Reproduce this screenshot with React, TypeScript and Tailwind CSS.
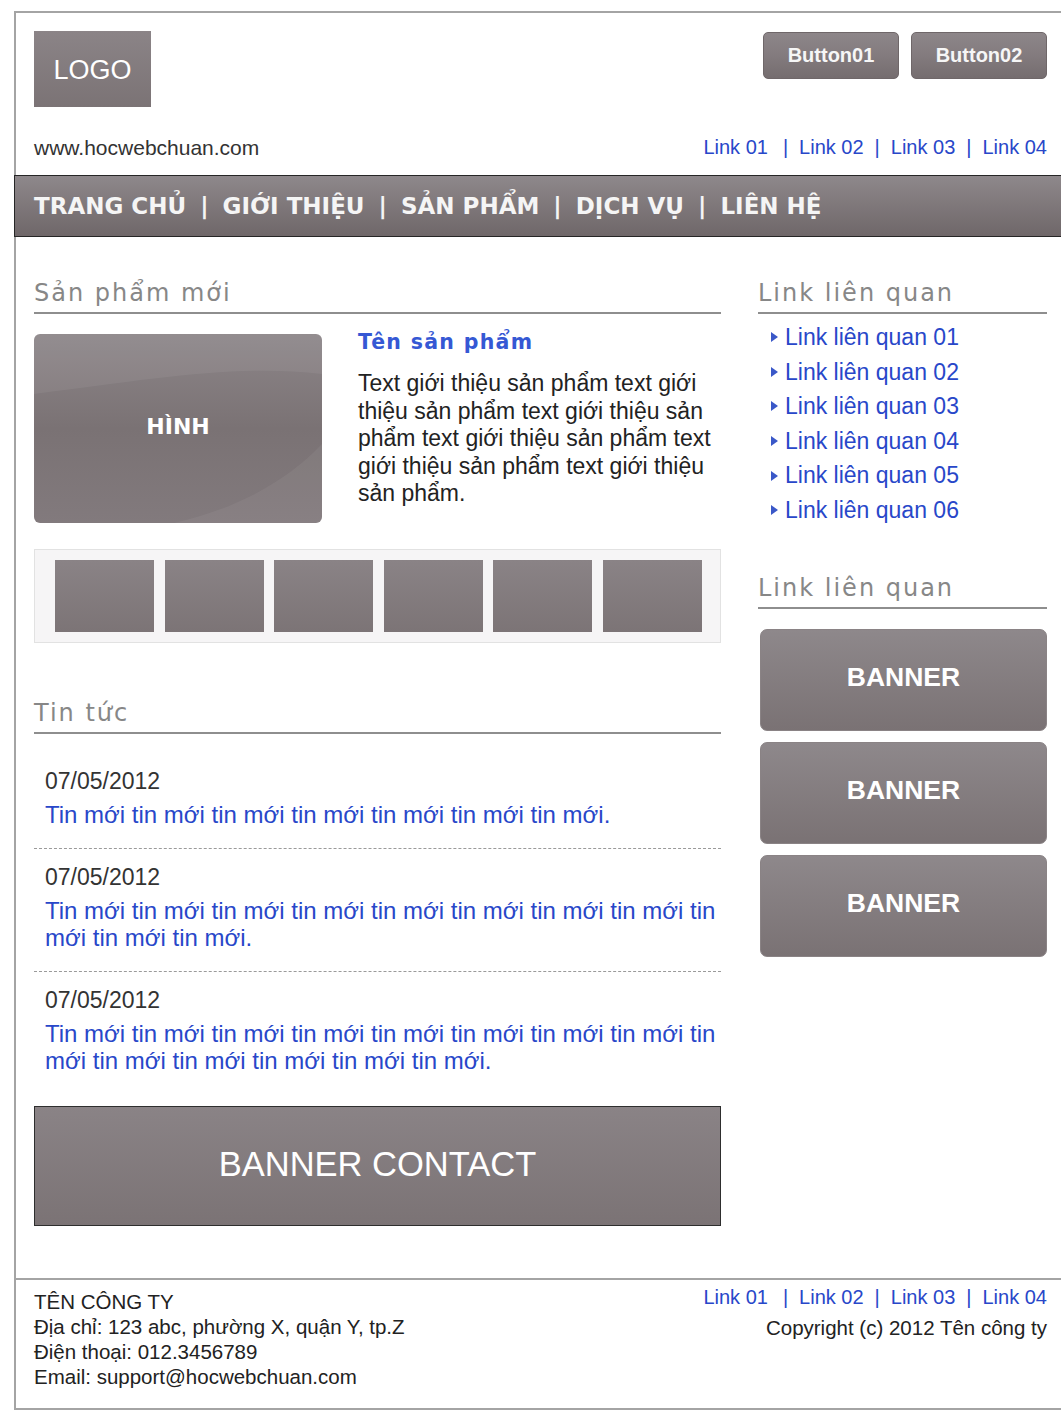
import React from "react";

const sans = "font-['Liberation_Sans',Arial,sans-serif]";
const wide = "font-['DejaVu_Sans',Verdana,sans-serif]";

const navItems = ["TRANG CHỦ", "GIỚI THIỆU", "SẢN PHẨM", "DỊCH VỤ", "LIÊN HỆ"];
const related = ["01", "02", "03", "04", "05", "06"];

const news = [
  "Tin mới tin mới tin mới tin mới tin mới tin mới tin mới.",
  "Tin mới tin mới tin mới tin mới tin mới tin mới tin mới tin mới tin mới tin mới tin mới.",
  "Tin mới tin mới tin mới tin mới tin mới tin mới tin mới tin mới tin mới tin mới tin mới tin mới tin mới tin mới.",
];

function Heading({ children }: { children: React.ReactNode }) {
  return (
    <h2 className={`${wide} text-[24px] leading-[30px] tracking-[2px] text-[#878787] border-b-2 border-[#8e8e8e] pb-[4px]`}>
      {children}
    </h2>
  );
}

function LinkBar({ first = false }: { first?: boolean }) {
  const links = ["Link 01", "Link 02", "Link 03", "Link 04"];
  return (
    <div className={`${sans} flex items-center text-[20px] leading-[25px] text-[#2847c9]`}>
      {links.map((l, i) => (
        <React.Fragment key={l}>
          {i > 0 && <span className={i === 1 && first ? "ml-[15px] mr-[11px]" : "mx-[11px]"}>|</span>}
          <a href="#">{l}</a>
        </React.Fragment>
      ))}
    </div>
  );
}

export default function App() {
  return (
    <div className={`${sans} bg-white min-h-screen pt-[11px] pl-[14px] text-[#222]`}>
      <div className="w-[1047px] border-t-2 border-l-2 border-b-2 border-[#a4a4a4]">
        {/* header */}
        <div className="pl-[18px] pr-[14px] pt-[18px]">
          <div className="flex items-start justify-between">
            <div className="w-[117px] h-[76px] flex items-center justify-center bg-linear-to-b from-[#8b8487] to-[#7b7375] text-white text-[27px] pt-[3px]">
              LOGO
            </div>
            <div className="flex gap-[12px] pt-[1px]">
              {["Button01", "Button02"].map((b) => (
                <button
                  key={b}
                  className="w-[136px] h-[47px] rounded-[5px] border border-[#6f6769] bg-linear-to-b from-[#8d8689] via-[#837b7e] to-[#756d6f] text-[#f6f6f6] font-bold text-[20px] pb-[2px]"
                >
                  {b}
                </button>
              ))}
            </div>
          </div>
          <div className="flex items-center justify-between mt-[28px] mb-[15px]">
            <span className="text-[21px] leading-[24px] text-[#333]">www.hocwebchuan.com</span>
            <LinkBar first />
          </div>
        </div>

        {/* nav */}
        <nav className="-ml-[2px] h-[62px] border border-r-0 border-[#262626] bg-linear-to-b from-[#8e888b] to-[#6f6769] flex items-center pl-[19px]">
          <ul className={`${wide} flex items-center gap-[14px] text-[23px] font-bold text-[#f5f5f5]`}>
            {navItems.map((n, i) => (
              <React.Fragment key={n}>
                {i > 0 && <li>|</li>}
                <li>{n}</li>
              </React.Fragment>
            ))}
          </ul>
        </nav>

        {/* main */}
        <div className="flex gap-[37px] pl-[18px] pr-[14px] pt-[41px] pb-[52px]">
          <div className="w-[687px]">
            <Heading>Sản phẩm mới</Heading>
            <div className="flex mt-[20px]">
              <div className="relative w-[288px] h-[189px] shrink-0 rounded-[6px] overflow-hidden bg-linear-to-b from-[#8d8689] via-[#7a7274] to-[#827a7d] flex items-center justify-center">
                <svg className="absolute inset-0" width="288" height="189" viewBox="0 0 288 189">
                  <path d="M0 0 H288 V40 C200 30 120 45 0 60 Z" fill="#ffffff" opacity="0.06" />
                  <path d="M288 110 C250 150 200 175 140 189 H288 Z" fill="#ffffff" opacity="0.05" />
                </svg>
                <span className={`${wide} relative text-white font-bold text-[22px] -mt-[4px]`}>HÌNH</span>
              </div>
              <div className="ml-[36px] -mt-[5px]">
                <h3 className={`${wide} text-[20.5px] leading-[26px] font-bold tracking-[1.3px] text-[#3558d4]`}>Tên sản phẩm</h3>
                <p className="mt-[15px] text-[23px] leading-[27.5px] text-[#222]">
                  Text giới thiệu sản phẩm text giới thiệu sản phẩm text giới thiệu sản phẩm text giới thiệu sản phẩm text giới thiệu sản phẩm text giới thiệu sản phẩm.
                </p>
              </div>
            </div>
            <div className="mt-[26px] h-[94px] border border-[#e2e2e2] bg-[#f6f5f6] pl-[20px] pt-[10px] flex gap-[10.5px]">
              {[0, 1, 2, 3, 4, 5].map((i) => (
                <div key={i} className="w-[99px] h-[72px] bg-linear-to-b from-[#8a8386] to-[#7c7476]" />
              ))}
            </div>

            <div className="mt-[55px]">
              <Heading>Tin tức</Heading>
            </div>
            <div className="mt-[19px]">
              {news.map((t, i) => (
                <div
                  key={i}
                  className={`pl-[11px] pt-[15px] pb-[20px] ${i < news.length - 1 ? "border-b border-dashed border-[#9a9a9a]" : ""}`}
                >
                  <div className="text-[23px] leading-[26px] text-[#333]">07/05/2012</div>
                  <a href="#" className="block mt-[7px] text-[24px] leading-[27px] text-[#2847c9]">
                    {t}
                  </a>
                </div>
              ))}
            </div>

            <div className="mt-[12px] h-[120px] border border-[#2e2e2e] bg-linear-to-b from-[#8a8386] to-[#7b7375] flex items-center justify-center">
              <span className="text-white text-[34.5px] pb-[2px]">BANNER CONTACT</span>
            </div>
          </div>

          <div className="w-[289px]">
            <Heading>Link liên quan</Heading>
            <ul className="mt-[6px] pl-[13px]">
              {related.map((r) => (
                <li key={r} className="flex items-center h-[34.6px] text-[23px] text-[#2847c9]">
                  <svg width="7" height="10" viewBox="0 0 7 10" className="mr-[7px] shrink-0">
                    <path d="M0 0 L7 5 L0 10 Z" fill="#3a58c8" />
                  </svg>
                  <a href="#">Link liên quan {r}</a>
                </li>
              ))}
            </ul>
            <div className="mt-[45px]">
              <Heading>Link liên quan</Heading>
            </div>
            <div className="mt-[20px] ml-[2px] flex flex-col gap-[11px]">
              {[0, 1, 2].map((i) => (
                <div
                  key={i}
                  className="h-[102px] rounded-[7px] border border-[#8a8385] bg-linear-to-b from-[#8e888b] to-[#7a7274] flex items-center justify-center pb-[4px]"
                >
                  <span className="text-white font-bold text-[26.5px]">BANNER</span>
                </div>
              ))}
            </div>
          </div>
        </div>

        {/* footer */}
        <footer className="border-t-2 border-[#a4a4a4] flex justify-between pl-[18px] pr-[14px] pt-[9px] pb-[19px]">
          <div className="text-[20.5px] leading-[25px] text-[#222]">
            <div>TÊN CÔNG TY</div>
            <div>Địa chỉ: 123 abc, phường X, quận Y, tp.Z</div>
            <div>Điện thoại: 012.3456789</div>
            <div>Email: support@hocwebchuan.com</div>
          </div>
          <div className="flex flex-col items-end -mt-[4px]">
            <LinkBar first />
            <div className="mt-[5px] text-[20.5px] leading-[25px] text-[#222]">Copyright (c) 2012 Tên công ty</div>
          </div>
        </footer>
      </div>
    </div>
  );
}
